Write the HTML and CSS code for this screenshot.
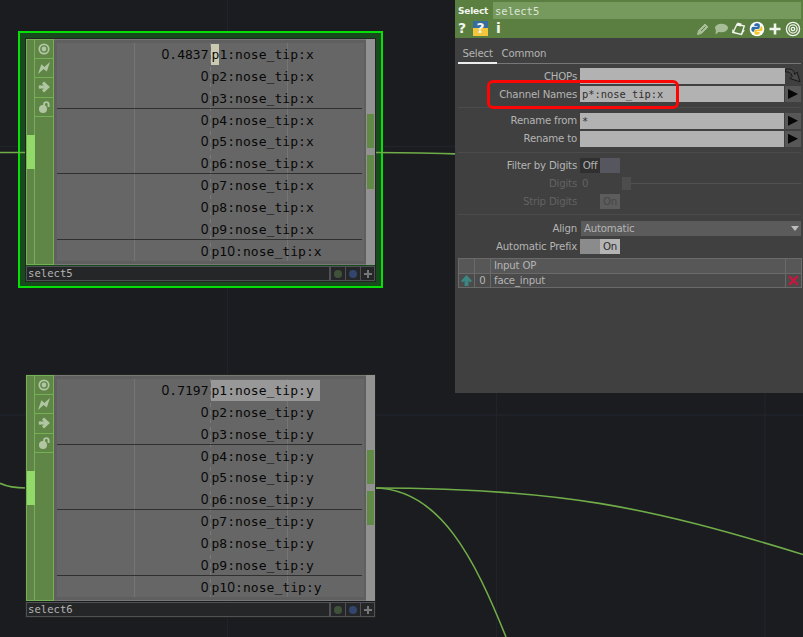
FILE: index.html
```
<!DOCTYPE html>
<html lang="en">
<head>
    <meta charset="UTF-8">
    <meta name="viewport" content="width=device-width, initial-scale=1.0">
    <title>select5</title>
    <link rel="stylesheet" href="styles.css">
</head>
<body>
    <svg class="defs" width="0" height="0">
        <symbol id="viewer" viewBox="0 0 12 12"><circle cx="6" cy="6" r="4.7" fill="none" stroke="currentColor" stroke-width="1.7"/><circle cx="6" cy="6" r="2.4" fill="currentColor"/></symbol>
        <symbol id="bolt" viewBox="0 0 12 12"><path d="M0 12 3.4 2.2 6.4 5 12 0 8.8 9.6 5.6 7Z" fill="currentColor"/></symbol>
        <symbol id="arrow" viewBox="0 0 12 12"><path d="M.8 6H8.5" stroke="currentColor" stroke-width="3.2"/><path d="M5 1.7 9.7 6 5 10.3" fill="none" stroke="currentColor" stroke-width="3"/></symbol>
        <symbol id="lock" viewBox="0 0 12 12"><circle cx="5" cy="8" r="4" fill="currentColor"/><path d="M6 5.5V3.4A2.3 2.3 0 0 1 10.6 3.4V6" fill="none" stroke="currentColor" stroke-width="1.9"/></symbol>
        <symbol id="plus" viewBox="0 0 12 12"><path d="M6 0V12M0 6H12" stroke="currentColor" stroke-width="3"/></symbol>
    </svg>

    <div class="network">
        <svg class="wires" width="803" height="637" fill="none">
            <path class="grid" d="M227.5 0V637M496.5 0V637M765 0V637M0 146.5H803M0 415H803"/>
        </svg>
        <div class="selection"></div>
        <svg class="wires" width="803" height="637" fill="none">
            <path class="wire" d="M0 152.5H26M374 152.5C400 152.5 430 153.2 455 153.9"/>
            <path class="wire" d="M0 483.3C8 487 16 488 26 488"/>
            <path class="wire" d="M374 488C560 488 650 507.5 803 554.5"/>
            <path class="wire" d="M374 488C440 488 475 560 506 637"/>
        </svg>

        <div class="node node-x">
            <div class="node-body">
                <div class="input"><i></i></div>
                <div class="flags">
                    <span><svg><use href="#viewer"/></svg></span>
                    <span><svg><use href="#bolt"/></svg></span>
                    <span><svg><use href="#arrow"/></svg></span>
                    <span><svg><use href="#lock"/></svg></span>
                </div>
                <div class="viewer">
                    <div class="channels">
                        <div class="row"><b><i>0</i>.4837</b><span><em class="cursor">p</em>1:nose_tip:x</span></div>
                        <div class="row"><b><i>0</i></b><span>p2:nose_tip:x</span></div>
                        <div class="row"><b><i>0</i></b><span>p3:nose_tip:x</span></div>
                        <div class="row"><b><i>0</i></b><span>p4:nose_tip:x</span></div>
                        <div class="row"><b><i>0</i></b><span>p5:nose_tip:x</span></div>
                        <div class="row"><b><i>0</i></b><span>p6:nose_tip:x</span></div>
                        <div class="row"><b><i>0</i></b><span>p7:nose_tip:x</span></div>
                        <div class="row"><b><i>0</i></b><span>p8:nose_tip:x</span></div>
                        <div class="row"><b><i>0</i></b><span>p9:nose_tip:x</span></div>
                        <div class="row"><b><i>0</i></b><span>p1<i>0</i>:nose_tip:x</span></div>
                    </div>
                </div>
                <div class="output"><i></i><i></i></div>
            </div>
            <div class="node-name">
                <span>select5</span>
                <i class="dot green"></i><i class="dot blue"></i><i class="more"><svg><use href="#plus"/></svg></i>
            </div>
        </div>

        <div class="node node-y">
            <div class="node-body">
                <div class="input"><i></i></div>
                <div class="flags">
                    <span><svg><use href="#viewer"/></svg></span>
                    <span><svg><use href="#bolt"/></svg></span>
                    <span><svg><use href="#arrow"/></svg></span>
                    <span><svg><use href="#lock"/></svg></span>
                </div>
                <div class="viewer">
                    <div class="channels">
                        <div class="row"><b><i>0</i>.7197</b><span><em class="marked">p1:nose_tip:y</em></span></div>
                        <div class="row"><b><i>0</i></b><span>p2:nose_tip:y</span></div>
                        <div class="row"><b><i>0</i></b><span>p3:nose_tip:y</span></div>
                        <div class="row"><b><i>0</i></b><span>p4:nose_tip:y</span></div>
                        <div class="row"><b><i>0</i></b><span>p5:nose_tip:y</span></div>
                        <div class="row"><b><i>0</i></b><span>p6:nose_tip:y</span></div>
                        <div class="row"><b><i>0</i></b><span>p7:nose_tip:y</span></div>
                        <div class="row"><b><i>0</i></b><span>p8:nose_tip:y</span></div>
                        <div class="row"><b><i>0</i></b><span>p9:nose_tip:y</span></div>
                        <div class="row"><b><i>0</i></b><span>p1<i>0</i>:nose_tip:y</span></div>
                    </div>
                </div>
                <div class="output"><i></i><i></i></div>
            </div>
            <div class="node-name">
                <span>select6</span>
                <i class="dot green"></i><i class="dot blue"></i><i class="more"><svg><use href="#plus"/></svg></i>
            </div>
        </div>

        <div class="panel">
            <div class="header">
                <div class="title"><strong>Select</strong><span>select5</span></div>
                <div class="tools">
                    <span class="help">?</span>
                    <span class="help pyhelp">?</span>
                    <span class="help info">i</span>
                    <svg class="dim first" viewBox="0 0 16 16"><path d="M2.5 13.5 3.5 9.5 10 3 13 6 6.5 12.5Z" fill="currentColor" stroke="currentColor"/><path d="M6 10 10.5 5.5" stroke="#5a7f40"/></svg>
                    <svg class="dim" viewBox="0 0 16 16"><ellipse cx="8.5" cy="7" rx="6.5" ry="4.2" fill="currentColor"/><path d="M3 8 2.5 13.5 7 10Z" fill="currentColor"/></svg>
                    <svg viewBox="0 0 16 16"><path d="M6 3.2 13.3 5 10.5 13.5 2 11.5Z" fill="none" stroke="currentColor" stroke-width="1.4"/><path d="M6.5 1.5 10.5 2.5 10 5.5 5.5 4.5ZM1.3 8V12H4.5ZM12 9.5 14 9 10.5 14Z" fill="currentColor"/></svg>
                    <svg viewBox="0 0 16 16"><circle cx="8" cy="8" r="7.3" fill="#fff"/><path d="M8 2.2C5.3 2.2 5.3 3.3 5.3 5H8.5V5.8H4C1.8 5.8 1.8 10.7 4 10.7H5.2C5.2 8.5 6 8 7.5 8H9C10.5 8 10.8 7 10.8 6V4C10.8 2.7 9.5 2.2 8 2.2Z" fill="#2f6cab"/><path d="M8 13.8C10.7 13.8 10.7 12.7 10.7 11H7.5V10.3H12C14.2 10.3 14.2 5.3 12 5.3H11.5C11.5 7.8 10.8 8.6 9 8.6H7.2C5.7 8.6 5.4 9.3 5.4 10.3V12C5.4 13.3 6.5 13.8 8 13.8Z" fill="#f6c82e"/></svg>
                    <svg viewBox="0 0 16 16"><path d="M8 2.5V13.5M2.5 8H13.5" stroke="currentColor" stroke-width="2.6"/></svg>
                    <svg viewBox="0 0 16 16" fill="none" stroke="currentColor" stroke-width="1.3"><circle cx="8" cy="8" r="6.6"/><circle cx="8" cy="8" r="4.1"/><circle cx="8" cy="8" r="1.7"/></svg>
                </div>
            </div>

            <div class="tabs"><span class="active">Select</span><span>Common</span></div>

            <div class="params">
                <div class="param chops">
                    <label>CHOPs</label><div class="field"></div>
                    <svg class="drop" viewBox="0 0 16 16"><path d="M.5 1.5C5 .5 8.5 1 9.7 6.5L12 4 15 13.8 5 10.5 7.2 8.3C6.2 4.5 4 3.8.5 3.8Z" fill="#4a4a4a" stroke="#171717" stroke-width="1"/></svg>
                </div>
                <div class="param"><label>Channel Names</label><div class="field">p*:nose_tip:x</div><div class="menu"></div></div>
                <hr>
                <div class="param"><label>Rename from</label><div class="field">*</div><div class="menu"></div></div>
                <div class="param"><label>Rename to</label><div class="field"></div><div class="menu"></div></div>
                <hr>
                <div class="param"><label>Filter by Digits</label><div class="toggle off"><span>Off</span><i></i></div></div>
                <div class="param disabled"><label>Digits</label><span class="number">0</span><div class="slider"><i></i></div></div>
                <div class="param disabled"><label>Strip Digits</label><div class="toggle strip"><i></i><span>On</span></div></div>
                <hr>
                <div class="param"><label>Align</label><div class="select">Automatic</div></div>
                <div class="param"><label>Automatic Prefix</label><div class="toggle on"><i></i><span>On</span></div></div>
            </div>

            <div class="inputs">
                <span></span><span></span><span class="op">Input OP</span><span></span>
                <span class="cell"><svg viewBox="0 0 12 12"><path d="M6 1 11 6.3 9.5 7.8 7.8 6.3V11H4.2V6.3L2.5 7.8 1 6.3Z" fill="#3c8783"/></svg></span>
                <span class="cell">0</span>
                <span class="cell op">face_input</span>
                <span class="cell"><svg viewBox="0 0 12 12"><path d="M2 2 10 10M10 2 2 10" stroke="#c5183f" stroke-width="2.2"/></svg></span>
            </div>
        </div>

        <div class="highlight"></div>
    </div>
</body>
</html>
```

FILE: styles.css
```
* {
    box-sizing: border-box;
}
body {
    margin: 0;
    background: #1b1c20;
    font-family: "DejaVu Sans", sans-serif;
    font-size: 10.2px;
    letter-spacing: -0.2px;
}
i, em {
    font-style: normal;
}
.defs {
    position: absolute;
}
.network {
    position: relative;
    width: 803px;
    height: 637px;
    overflow: hidden;
}
.wires {
    position: absolute;
    left: 0;
    top: 0;
}
.grid {
    stroke: #21232b;
    stroke-width: 1.3;
}
.wire {
    stroke: #70ad48;
    stroke-width: 1.6;
}

/* nodes */
.selection {
    position: absolute;
    left: 18px;
    top: 31px;
    width: 365px;
    height: 257px;
    background: #174a1c;
    border: 2px solid #06e006;
}
.node {
    position: absolute;
    left: 26px;
    width: 349px;
    height: 242px;
    box-shadow: 0 0 0 1px #20251f;
}
.node-x {
    top: 39px;
}
.node-y {
    top: 375px;
}
.node-body {
    display: flex;
    height: 226px;
    background: #8c8c8c;
}
.input {
    width: 9px;
    padding-top: 95px;
    background: #608647;
    border: 1px solid #76b055;
}
.input i {
    display: block;
    width: 8px;
    height: 34px;
    background: #91d968;
}
.flags {
    width: 19px;
    background: #608647;
    border-top: 1px solid #76b055;
    border-right: 1px solid #76b055;
    border-bottom: 1px solid #76b055;
}
.flags span {
    display: flex;
    align-items: center;
    justify-content: center;
    height: 19.2px;
    border-bottom: 1px solid #76b055;
    color: #b0c6a2;
}
.flags svg {
    width: 12px;
    height: 12px;
}
.viewer {
    flex: 1;
    padding: 3px 2px 3px 3px;
    background: #5f5f5f;
    border-top: 1px solid #777;
    border-bottom: 1px solid #777;
}
.channels {
    height: 218px;
    padding-right: 2px;
    background:
        linear-gradient(#757575, #757575) 77px 0 / 1px 100% no-repeat,
        repeating-linear-gradient(#7b7b7b 0 4px, transparent 4px 8px) 153px 0 / 1px 100% no-repeat,
        linear-gradient(#757575, #757575) 230px 0 / 1px 100% no-repeat,
        #666;
}
.row {
    display: flex;
    height: 21.87px;
    line-height: 23.5px;
    color: #080808;
    font-family: "DejaVu Sans Mono", monospace;
    font-size: 13px;
    letter-spacing: 0;
    white-space: nowrap;
}
.row:nth-child(3n) {
    border-bottom: 1px solid #303030;
}
.row b {
    width: 151.5px;
    font-weight: normal;
    text-align: right;
}
.row > span {
    padding-left: 3px;
    letter-spacing: 0.04px;
}
.row i {
    font-family: "Noto Sans", sans-serif;
    font-size: 13.7px;
    line-height: 1;
}
.cursor {
    margin-left: -1px;
    padding: 3px 0 3px 1px;
    background: #cacab0;
}
.marked {
    margin-left: -1px;
    padding: 3px 6px 3px 1px;
    background: #989898;
}
.output {
    display: flex;
    flex-direction: column;
    gap: 7px;
    width: 9px;
    padding: 75px 1px 0;
    background: #929292;
}
.output i {
    height: 34px;
    background: #608a46;
}
.node-name {
    display: flex;
    height: 15px;
    margin-top: 1px;
    background: #252628;
    border: 1px solid #505154;
    color: #b5b5b5;
    font-family: "DejaVu Sans Mono", monospace;
    font-size: 10.6px;
    letter-spacing: 0;
    line-height: 13px;
}
.node-name span {
    flex: 1;
    padding-left: 1px;
    border-right: 2px solid #505154;
}
.dot, .more {
    display: flex;
    align-items: center;
    justify-content: center;
    width: 13px;
    color: #777;
}
.dot {
    width: 15px;
    border-right: 1px solid #505154;
}
.dot::before {
    content: "";
    width: 8px;
    height: 8px;
    border-radius: 50%;
    background: #40533a;
}
.dot.blue::before {
    background: #31456d;
}
.more svg {
    width: 8px;
    height: 8px;
}

/* parameter panel */
.panel {
    position: absolute;
    left: 455px;
    top: 0;
    width: 348px;
    height: 393px;
    background: #404040;
    color: #b4b4b4;
}
.header {
    height: 38px;
    padding: 2px 2px 0 3px;
    background: #5a7f40;
    color: #f2f5ef;
}
.title {
    display: flex;
    height: 17px;
    line-height: 18px;
}
.title strong {
    width: 35px;
    font-size: 9px;
}
.title span {
    flex: 1;
    padding-left: 2px;
    background: #769a5d;
    color: #dde5d7;
    font-family: "DejaVu Sans Mono", monospace;
    font-size: 10.5px;
    letter-spacing: 0;
}
.tools {
    display: flex;
    align-items: center;
    height: 19px;
}
.tools svg {
    width: 16px;
    height: 16px;
    margin-left: 2px;
}
.tools .first {
    margin-left: auto;
}
.tools .dim {
    color: #a6bd97;
}
.help {
    width: 15px;
    font-size: 14px;
    font-weight: bold;
    line-height: 15px;
}
.pyhelp {
    text-align: center;
    background: linear-gradient(#356d9f 50%, #f3c63c 50%);
}
.info {
    margin-left: 8px;
}
.tabs {
    display: flex;
    height: 26px;
    margin: 0 2px 0 3px;
    box-shadow: inset 0 -1px #777;
    line-height: 32px;
}
.tabs span {
    padding: 0 5px 0 4.5px;
}
.tabs .active {
    width: 39px;
    border-bottom: 2px solid #ededed;
}
.params {
    padding: 3px 2px 0 3px;
}
.params hr {
    height: 1px;
    margin: 3.8px 0 4px;
    border: 0;
    background: #4b4b4b;
}
.param {
    display: flex;
    align-items: center;
    height: 18px;
}
.param label {
    width: 119px;
    margin-right: 3px;
    text-align: right;
}
.field {
    flex: 1;
    height: 16px;
    padding-left: 2px;
    background: #b2b2b2;
    color: #303030;
    font-family: "DejaVu Sans Mono", monospace;
    font-size: 10.4px;
    letter-spacing: 0;
    line-height: 17px;
}
.menu {
    width: 16px;
    height: 16px;
    margin-left: 1px;
    padding: 3px 3px;
    background: #575757;
}
.menu::before {
    content: "";
    display: block;
    width: 10px;
    height: 10px;
    background: #060606;
    clip-path: polygon(0 0, 100% 50%, 0 100%);
}
.drop {
    width: 16px;
    height: 16px;
}
.toggle {
    display: flex;
    width: 40px;
    height: 15px;
    line-height: 15px;
    text-align: center;
}
.toggle span, .toggle i {
    width: 20px;
}
.off {
    background: #303030;
}
.off i {
    background: #56565f;
}
.on {
    background: #8b8b8b;
}
.on span {
    background: #b4b4b4;
    color: #2b2b2b;
}
.strip span {
    background: #5c5c5c;
    color: #464646;
}
.disabled {
    color: #626262;
}
.number {
    width: 42px;
    padding-left: 2px;
}
.slider {
    display: flex;
    align-items: center;
    flex: 1;
    height: 13px;
    background: linear-gradient(#515151, #515151) 0 6px / 100% 1px no-repeat;
}
.slider i {
    width: 9px;
    height: 13px;
    background: #4d4d4d;
}
.select {
    display: flex;
    align-items: center;
    justify-content: space-between;
    flex: 1;
    height: 15px;
    margin-left: 1px;
    padding: 0 2px 0 3px;
    background: #5b5b5b;
}
.select::after {
    content: "";
    width: 8px;
    height: 5px;
    background: #bcbcbc;
    clip-path: polygon(0 0, 100% 0, 50% 100%);
}
.inputs {
    display: grid;
    grid-template-columns: 15px 15px 1fr 15px;
    grid-template-rows: 14px 13px;
    gap: 1px;
    margin: 3px 1px 0 3px;
    padding: 1px;
    background: #6a6a6a;
    line-height: 14px;
}
.inputs span {
    background: #575757;
}
.inputs .cell {
    display: flex;
    align-items: center;
    justify-content: center;
    background: #4b4b4b;
}
.inputs .op {
    justify-content: flex-start;
    padding-left: 3px;
}
.inputs svg {
    width: 13px;
    height: 13px;
}
.highlight {
    position: absolute;
    left: 487px;
    top: 80px;
    width: 192px;
    height: 29px;
    border: 3.5px solid #fb0505;
    border-radius: 6px;
}
```
